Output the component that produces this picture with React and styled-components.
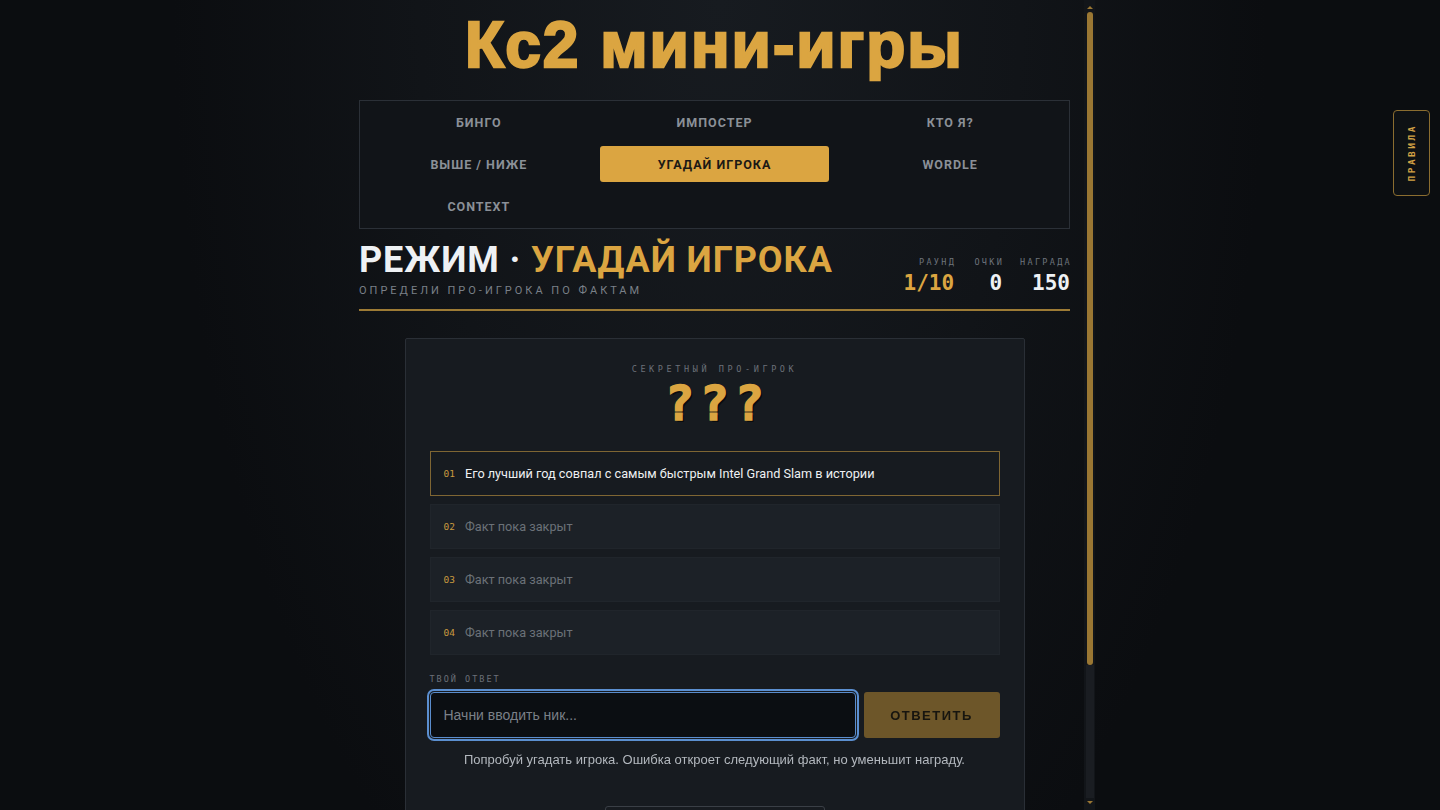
import React from 'react'
import styled, { createGlobalStyle } from 'styled-components'

const GlobalStyle = createGlobalStyle`
  * { box-sizing: border-box; }
  html, body {
    margin: 0;
    height: 100%;
    overflow: hidden;
  }
  body {
    background: radial-gradient(ellipse 38% 130% at 50% 0%, #171b20 0%, #111418 55%, #0b0d10 100%);
    background-color: #0b0d10;
    font-family: 'Roboto', 'Liberation Sans', sans-serif;
    color: #e6e8ea;
  }
`

const Frame = styled.div`
  display: flex;
  width: 750px;
  height: 100vh;
  margin: 0 auto;
`

const Scroller = styled.main`
  flex: 1;
  min-width: 0;
  overflow: hidden;
  padding: 14px 14px 110px;
`

const Track = styled.div`
  width: 11px;
  display: flex;
  flex-direction: column;
  align-items: center;
  padding: 4px 0;
  background: #121519;
`

const Arrow = styled.div`
  width: 0;
  height: 0;
  margin: 2px 0 3px;
  border-left: 3px solid transparent;
  border-right: 3px solid transparent;
  ${p => (p.$down
    ? 'border-top: 3px solid #9a7733; margin: 3px 0 2px;'
    : 'border-bottom: 3px solid #9a7733;')}
`

const Thumb = styled.div`
  width: 6px;
  height: 653px;
  border-radius: 3px;
  background: #9a7733;
`

const Rest = styled.div`
  flex: 1;
  width: 8px;
  background: #1a1d22;
`

const Title = styled.h1`
  margin: 0 0 24px;
  text-align: center;
  font-family: 'Liberation Sans', Arial, sans-serif;
  font-size: 64px;
  line-height: 62px;
  font-weight: 700;
  letter-spacing: 2px;
  color: #dba541;
  -webkit-text-stroke: 2.4px #dba541;
`

const Nav = styled.nav`
  display: grid;
  grid-template-columns: repeat(3, 1fr);
  gap: 6px;
  padding: 3px 4px 4px;
  border: 1px solid #2b3037;
  background: #111418;
`

const Tab = styled.button`
  height: 36px;
  border: none;
  border-radius: 3px;
  background: ${p => (p.$active ? '#dba541' : 'transparent')};
  color: ${p => (p.$active ? '#1b1915' : '#8b9097')};
  font-family: 'Roboto', sans-serif;
  font-size: 12.5px;
  font-weight: 700;
  letter-spacing: 1px;
  cursor: pointer;
`

const Header = styled.header`
  display: flex;
  justify-content: space-between;
  align-items: flex-end;
  margin-top: 11px;
  padding-bottom: 11px;
  border-bottom: 2px solid #9d7b35;
`

const Heading = styled.h2`
  margin: 0;
  font-family: 'Roboto', sans-serif;
  font-size: 36px;
  line-height: 40px;
  font-weight: 700;
  letter-spacing: 0.9px;
  color: #eef1f4;

  span {
    color: #dba541;
  }
`

const Subtitle = styled.div`
  margin-top: 4px;
  font-size: 11px;
  line-height: 14px;
  letter-spacing: 3px;
  color: #7a8088;
`

const Stats = styled.div`
  display: flex;
  gap: 18px;
  margin-bottom: 3px;
`

const Stat = styled.div`
  min-width: 30px;
  text-align: right;
`

const StatLabel = styled.div`
  font-family: 'DejaVu Sans Mono', monospace;
  font-size: 8.5px;
  line-height: 12px;
  letter-spacing: 2.3px;
  margin-right: -2px;
  color: #6d737b;
`

const StatValue = styled.div`
  margin-top: 3px;
  font-family: 'DejaVu Sans Mono', monospace;
  font-size: 21px;
  line-height: 24px;
  font-weight: 700;
  color: ${p => (p.$gold ? '#dba541' : '#eef1f4')};
`

const Card = styled.section`
  width: 620px;
  margin: 27px auto 0;
  padding: 24px 24px 28px;
  background: #171b20;
  border: 1px solid #2a2f36;
  border-radius: 2px;
`

const SecretLabel = styled.div`
  text-align: center;
  font-family: 'DejaVu Sans Mono', monospace;
  font-size: 8.5px;
  line-height: 12px;
  letter-spacing: 3.6px;
  color: #6b7078;
`

const Secret = styled.div`
  margin-top: 2px;
  text-align: center;
  font-family: 'DejaVu Sans Mono', monospace;
  font-size: 48px;
  line-height: 52px;
  font-weight: 700;
  letter-spacing: 6px;
  padding-left: 6px;
  color: #dba541;
  -webkit-text-stroke: 1.6px #dba541;
  text-shadow: 2px 2px 0 #0a0c0e;
`

const Facts = styled.div`
  display: flex;
  flex-direction: column;
  gap: 8px;
  margin-top: 22px;
`

const Fact = styled.div`
  display: flex;
  align-items: center;
  gap: 10px;
  height: 45px;
  padding: 0 13px;
  border: 1px solid ${p => (p.$open ? '#7f6633' : '#20252b')};
  background: ${p => (p.$open ? '#171b20' : '#1c2127')};
`

const FactNum = styled.span`
  font-family: 'DejaVu Sans Mono', monospace;
  font-size: 9.5px;
  color: #c99a3f;
`

const FactText = styled.span`
  font-size: 12.7px;
  color: ${p => (p.$open ? '#eef0f2' : '#6b7178')};
`

const AnswerLabel = styled.div`
  margin-top: 18px;
  font-family: 'DejaVu Sans Mono', monospace;
  font-size: 8.5px;
  line-height: 12px;
  letter-spacing: 2px;
  color: #6b7078;
`

const AnswerRow = styled.div`
  display: flex;
  gap: 8px;
  margin-top: 7px;
`

const Input = styled.input`
  flex: 1;
  height: 46px;
  padding: 0 13px;
  background: #0b0e12;
  border: 1px solid #5a8ccc;
  border-radius: 4px;
  outline: 2px solid #5b8fd0;
  outline-offset: 1px;
  color: #e6e8ea;
  font-family: 'Liberation Sans', Arial, sans-serif;
  font-size: 14px;

  &::placeholder {
    color: #7b8088;
  }
`

const Submit = styled.button`
  width: 136px;
  height: 46px;
  border: none;
  border-radius: 3px;
  background: #6d5629;
  color: #17150f;
  font-family: 'Liberation Sans', Arial, sans-serif;
  font-size: 13px;
  font-weight: 700;
  letter-spacing: 1.5px;
`

const Hint = styled.p`
  margin: 14px 0 0;
  text-align: center;
  font-family: 'Liberation Sans', Arial, sans-serif;
  font-size: 13px;
  line-height: 16px;
  color: #b3b8be;
`

const Actions = styled.div`
  display: flex;
  justify-content: center;
  margin-top: 38px;
`

const Ghost = styled.button`
  width: 220px;
  height: 38px;
  border: 1px solid #3a3f46;
  border-radius: 3px;
  background: transparent;
  color: #8b9097;
  font-family: 'Roboto', sans-serif;
  font-size: 12px;
  font-weight: 700;
  letter-spacing: 1.5px;
`

const RulesButton = styled.button`
  position: fixed;
  top: 110px;
  right: 10px;
  width: 37px;
  height: 86px;
  display: flex;
  align-items: center;
  justify-content: center;
  padding: 0;
  border: 1px solid #8b6d30;
  border-radius: 4px;
  background: #0e1114;
  color: #d2a145;
  font-family: 'DejaVu Sans Mono', monospace;
  font-size: 9.5px;
  font-weight: 700;
  letter-spacing: 2.5px;

  span {
    writing-mode: vertical-rl;
    transform: rotate(180deg);
  }
`

const tabs = ['БИНГО', 'ИМПОСТЕР', 'КТО Я?', 'ВЫШЕ / НИЖЕ', 'УГАДАЙ ИГРОКА', 'WORDLE', 'CONTEXT']

const facts = [
  { text: 'Его лучший год совпал с самым быстрым Intel Grand Slam в истории', open: true },
  { text: 'Факт пока закрыт' },
  { text: 'Факт пока закрыт' },
  { text: 'Факт пока закрыт' },
]

const App = () => {
  return (
    <>
      <GlobalStyle />
      <Frame>
        <Scroller>
          <Title>Кс2 мини-игры</Title>
          <Nav>
            {tabs.map(t => (
              <Tab key={t} $active={t === 'УГАДАЙ ИГРОКА'}>{t}</Tab>
            ))}
          </Nav>
          <Header>
            <div>
              <Heading>РЕЖИМ · <span>УГАДАЙ ИГРОКА</span></Heading>
              <Subtitle>ОПРЕДЕЛИ ПРО-ИГРОКА ПО ФАКТАМ</Subtitle>
            </div>
            <Stats>
              <Stat>
                <StatLabel>РАУНД</StatLabel>
                <StatValue $gold>1/10</StatValue>
              </Stat>
              <Stat>
                <StatLabel>ОЧКИ</StatLabel>
                <StatValue>0</StatValue>
              </Stat>
              <Stat>
                <StatLabel>НАГРАДА</StatLabel>
                <StatValue>150</StatValue>
              </Stat>
            </Stats>
          </Header>
          <Card>
            <SecretLabel>СЕКРЕТНЫЙ ПРО-ИГРОК</SecretLabel>
            <Secret>???</Secret>
            <Facts>
              {facts.map((f, i) => (
                <Fact key={i} $open={f.open}>
                  <FactNum>0{i + 1}</FactNum>
                  <FactText $open={f.open}>{f.text}</FactText>
                </Fact>
              ))}
            </Facts>
            <AnswerLabel>ТВОЙ ОТВЕТ</AnswerLabel>
            <AnswerRow>
              <Input placeholder="Начни вводить ник..." autoFocus />
              <Submit>ОТВЕТИТЬ</Submit>
            </AnswerRow>
            <Hint>Попробуй угадать игрока. Ошибка откроет следующий факт, но уменьшит награду.</Hint>
            <Actions>
              <Ghost>ПОКАЗАТЬ ОТВЕТ</Ghost>
            </Actions>
          </Card>
        </Scroller>
        <Track>
          <Arrow />
          <Thumb />
          <Rest />
          <Arrow $down />
        </Track>
      </Frame>
      <RulesButton><span>ПРАВИЛА</span></RulesButton>
    </>
  )
}

export default App
